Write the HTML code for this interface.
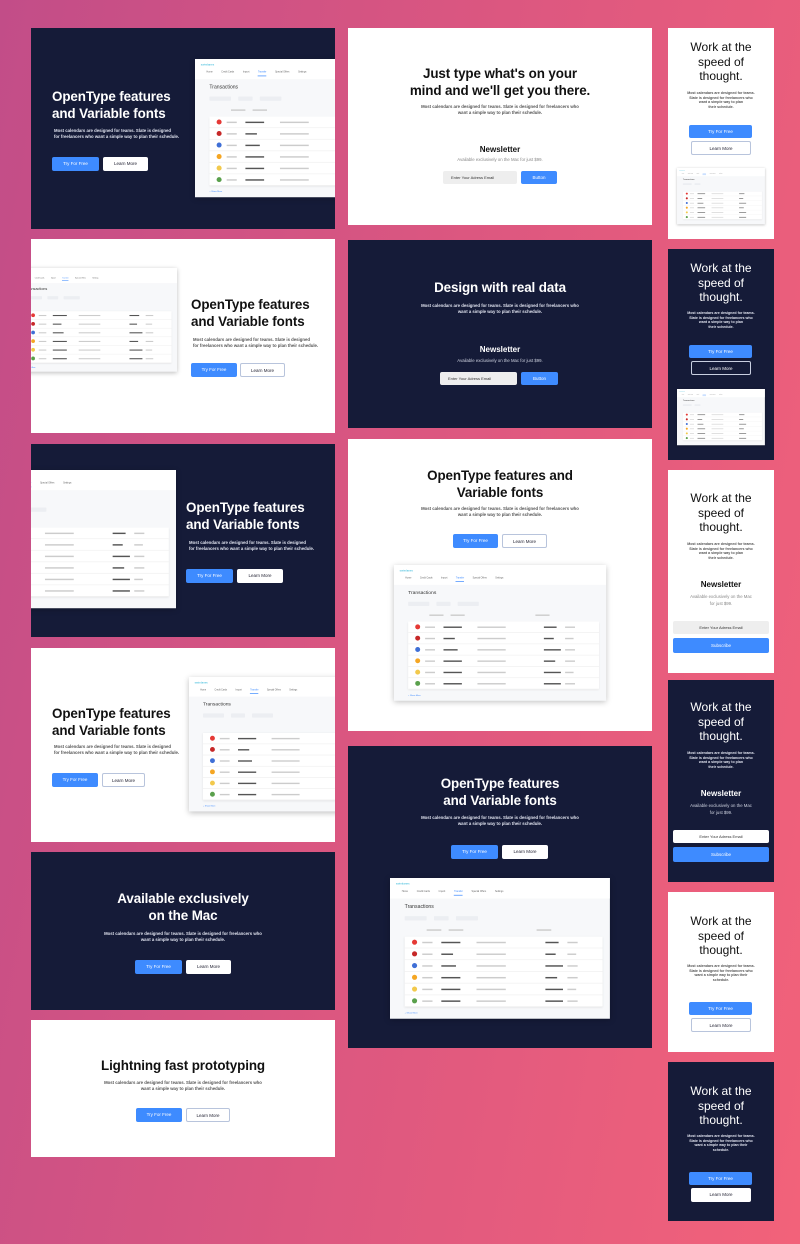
<!DOCTYPE html>
<html><head><meta charset="utf-8"><style>
*{margin:0;padding:0;box-sizing:border-box}
body{width:800px;height:1244px;position:relative;overflow:hidden;font-family:"Liberation Sans",sans-serif;background:linear-gradient(100deg,#c24d88 0%,#dc5780 50%,#f2627a 100%)}
.c{position:absolute;overflow:hidden}
.d{background:#151b38;color:#fff}
.w{background:#fff;color:#111}
.h{position:absolute;font-weight:bold;font-size:13.4px;line-height:16.5px;white-space:nowrap;letter-spacing:-0.1px}
.ctr{left:0;right:0;text-align:center}
.p{position:absolute;font-size:4.3px;line-height:6px;white-space:nowrap;font-weight:bold}
.d .p{color:#dfe2ee}.w .p{color:#555}
.b,.o{position:absolute;height:14px;font-size:4.5px;line-height:14px;text-align:center;border-radius:2px}
.b{background:#3e8bff;color:#fff}
.o{background:#fff;color:#223;border:1px solid #b8c4dc}
.d .o{border:none}
.n{position:absolute;font-weight:bold;font-size:8px}
.g{position:absolute;font-size:4.3px;color:#888}
.in{position:absolute;height:13px;background:#eee;font-size:4px;line-height:13px;color:#333;padding-left:8px;border-radius:2px}
.t{position:absolute;font-size:12px;line-height:14.5px;text-align:center;left:0;right:0}
.dash{position:absolute;width:300px;height:192px;background:#f7f8fa;transform-origin:0 0;box-shadow:0 2px 8px rgba(0,0,0,.25);overflow:hidden}
.dash .top{position:absolute;left:0;top:0;width:300px;height:28px;background:#fff}
.dash .lg{position:absolute;left:8px;top:5px;font-size:4px;color:#2bb5d8}
.dash .nv{position:absolute;left:16px;top:16px;font-size:3.2px;color:#666;white-space:nowrap}
.dash .nv span{margin-right:12px}
.dash .nv .a{color:#3e8bff;border-bottom:1px solid #3e8bff;padding-bottom:3px}
.dash .tt{position:absolute;left:20px;top:36px;font-size:7px;color:#333}
.dash .f{position:absolute;top:52px;height:6px;background:#eceef2;border-radius:1px}
.dash .hd{position:absolute;top:70px;height:1.5px;background:#ccc}
.dash .tb{position:absolute;left:20px;top:80px;width:270px;height:96px;background:#fff;box-shadow:0 1px 3px rgba(0,0,0,.1)}
.dash .r{position:relative;height:16px;border-bottom:1px solid #f0f0f0}
.dash .r i{position:absolute;left:10px;top:4px;width:7px;height:7px;border-radius:50%}
.dash .r b{position:absolute;top:7px;height:1.5px;background:#ccc}
.dash .r .k{background:#555}
.dash .sm{position:absolute;left:20px;top:182px;font-size:3px;color:#3e8bff}
</style></head><body>

<div class="c d" style="left:31px;top:28px;width:304px;height:201px">
<div class="h" style="left:21px;top:61px">OpenType features<br>and Variable fonts</div>
<div class="p" style="left:23px;top:100px">Most calendars are designed for teams. Slate is designed<br>for freelancers who want a simple way to plan their schedule.</div>
<div class="b" style="left:21px;top:129px;width:47px">Try For Free</div>
<div class="o" style="left:72px;top:129px;width:45px">Learn More</div>
<div class="dash" style="left:164px;top:31px;transform:scale(.72)"><div class="top"></div><div class="lg">swimlanes</div><div class="nv"><span>Home</span><span>Credit Cards</span><span>Import</span><span class="a">Transfer</span><span>Special Offers</span><span>Settings</span></div><div class="tt">Transactions</div><div class="f" style="left:20px;width:30px"></div><div class="f" style="left:60px;width:20px"></div><div class="f" style="left:90px;width:30px"></div><div class="hd" style="left:50px;width:20px"></div><div class="hd" style="left:80px;width:20px"></div><div class="hd" style="left:200px;width:20px"></div><div class="tb"><div class="r"><i style="background:#e53935"></i><b style="left:24px;width:14px"></b><b class="k" style="left:50px;width:26px"></b><b style="left:98px;width:40px"></b><b class="k" style="left:192px;width:18px"></b><b style="left:222px;width:14px"></b></div><div class="r"><i style="background:#c62828"></i><b style="left:24px;width:14px"></b><b class="k" style="left:50px;width:16px"></b><b style="left:98px;width:40px"></b><b class="k" style="left:192px;width:14px"></b><b style="left:222px;width:12px"></b></div><div class="r"><i style="background:#3f6fd6"></i><b style="left:24px;width:14px"></b><b class="k" style="left:50px;width:20px"></b><b style="left:98px;width:40px"></b><b class="k" style="left:192px;width:24px"></b><b style="left:222px;width:14px"></b></div><div class="r"><i style="background:#f5a623"></i><b style="left:24px;width:14px"></b><b class="k" style="left:50px;width:26px"></b><b style="left:98px;width:40px"></b><b class="k" style="left:192px;width:16px"></b><b style="left:222px;width:14px"></b></div><div class="r"><i style="background:#f2c94c"></i><b style="left:24px;width:14px"></b><b class="k" style="left:50px;width:26px"></b><b style="left:98px;width:40px"></b><b class="k" style="left:192px;width:24px"></b><b style="left:222px;width:12px"></b></div><div class="r"><i style="background:#5aa04c"></i><b style="left:24px;width:14px"></b><b class="k" style="left:50px;width:26px"></b><b style="left:98px;width:40px"></b><b class="k" style="left:192px;width:24px"></b><b style="left:222px;width:14px"></b></div></div><div class="sm">+ Show More</div></div>
</div>

<div class="c w" style="left:31px;top:239px;width:304px;height:194px">
<div class="dash" style="left:-16px;top:29px;transform:scale(.54)"><div class="top"></div><div class="lg">swimlanes</div><div class="nv"><span>Home</span><span>Credit Cards</span><span>Import</span><span class="a">Transfer</span><span>Special Offers</span><span>Settings</span></div><div class="tt">Transactions</div><div class="f" style="left:20px;width:30px"></div><div class="f" style="left:60px;width:20px"></div><div class="f" style="left:90px;width:30px"></div><div class="tb"><div class="r"><i style="background:#e53935"></i><b style="left:24px;width:14px"></b><b class="k" style="left:50px;width:26px"></b><b style="left:98px;width:40px"></b><b class="k" style="left:192px;width:18px"></b><b style="left:222px;width:14px"></b></div><div class="r"><i style="background:#c62828"></i><b style="left:24px;width:14px"></b><b class="k" style="left:50px;width:16px"></b><b style="left:98px;width:40px"></b><b class="k" style="left:192px;width:14px"></b><b style="left:222px;width:12px"></b></div><div class="r"><i style="background:#3f6fd6"></i><b style="left:24px;width:14px"></b><b class="k" style="left:50px;width:20px"></b><b style="left:98px;width:40px"></b><b class="k" style="left:192px;width:24px"></b><b style="left:222px;width:14px"></b></div><div class="r"><i style="background:#f5a623"></i><b style="left:24px;width:14px"></b><b class="k" style="left:50px;width:26px"></b><b style="left:98px;width:40px"></b><b class="k" style="left:192px;width:16px"></b><b style="left:222px;width:14px"></b></div><div class="r"><i style="background:#f2c94c"></i><b style="left:24px;width:14px"></b><b class="k" style="left:50px;width:26px"></b><b style="left:98px;width:40px"></b><b class="k" style="left:192px;width:24px"></b><b style="left:222px;width:12px"></b></div><div class="r"><i style="background:#5aa04c"></i><b style="left:24px;width:14px"></b><b class="k" style="left:50px;width:26px"></b><b style="left:98px;width:40px"></b><b class="k" style="left:192px;width:24px"></b><b style="left:222px;width:14px"></b></div></div><div class="sm">+ Show More</div></div>
<div class="h" style="left:160px;top:58px">OpenType features<br>and Variable fonts</div>
<div class="p" style="left:162px;top:98px">Most calendars are designed for teams. Slate is designed<br>for freelancers who want a simple way to plan their schedule.</div>
<div class="b" style="left:160px;top:124px;width:46px">Try For Free</div>
<div class="o" style="left:209px;top:124px;width:45px">Learn More</div>
</div>

<div class="c d" style="left:31px;top:444px;width:304px;height:193px">
<div class="dash" style="left:-71px;top:26px;transform:scale(.72)"><div class="top"></div><div class="lg">swimlanes</div><div class="nv"><span>Home</span><span>Credit Cards</span><span>Import</span><span class="a">Transfer</span><span>Special Offers</span><span>Settings</span></div><div class="tt">Transactions</div><div class="f" style="left:20px;width:30px"></div><div class="f" style="left:60px;width:20px"></div><div class="f" style="left:90px;width:30px"></div><div class="tb"><div class="r"><i style="background:#e53935"></i><b style="left:24px;width:14px"></b><b class="k" style="left:50px;width:26px"></b><b style="left:98px;width:40px"></b><b class="k" style="left:192px;width:18px"></b><b style="left:222px;width:14px"></b></div><div class="r"><i style="background:#c62828"></i><b style="left:24px;width:14px"></b><b class="k" style="left:50px;width:16px"></b><b style="left:98px;width:40px"></b><b class="k" style="left:192px;width:14px"></b><b style="left:222px;width:12px"></b></div><div class="r"><i style="background:#3f6fd6"></i><b style="left:24px;width:14px"></b><b class="k" style="left:50px;width:20px"></b><b style="left:98px;width:40px"></b><b class="k" style="left:192px;width:24px"></b><b style="left:222px;width:14px"></b></div><div class="r"><i style="background:#f5a623"></i><b style="left:24px;width:14px"></b><b class="k" style="left:50px;width:26px"></b><b style="left:98px;width:40px"></b><b class="k" style="left:192px;width:16px"></b><b style="left:222px;width:14px"></b></div><div class="r"><i style="background:#f2c94c"></i><b style="left:24px;width:14px"></b><b class="k" style="left:50px;width:26px"></b><b style="left:98px;width:40px"></b><b class="k" style="left:192px;width:24px"></b><b style="left:222px;width:12px"></b></div><div class="r"><i style="background:#5aa04c"></i><b style="left:24px;width:14px"></b><b class="k" style="left:50px;width:26px"></b><b style="left:98px;width:40px"></b><b class="k" style="left:192px;width:24px"></b><b style="left:222px;width:14px"></b></div></div><div class="sm">+ Show More</div></div>
<div class="h" style="left:155px;top:56px">OpenType features<br>and Variable fonts</div>
<div class="p" style="left:158px;top:96px">Most calendars are designed for teams. Slate is designed<br>for freelancers who want a simple way to plan their schedule.</div>
<div class="b" style="left:155px;top:125px;width:47px">Try For Free</div>
<div class="o" style="left:206px;top:125px;width:46px">Learn More</div>
</div>

<div class="c w" style="left:31px;top:648px;width:304px;height:194px">
<div class="h" style="left:21px;top:58px">OpenType features<br>and Variable fonts</div>
<div class="p" style="left:23px;top:96px">Most calendars are designed for teams. Slate is designed<br>for freelancers who want a simple way to plan their schedule.</div>
<div class="b" style="left:21px;top:125px;width:46px">Try For Free</div>
<div class="o" style="left:71px;top:125px;width:43px">Learn More</div>
<div class="dash" style="left:158px;top:29px;transform:scale(.7)"><div class="top"></div><div class="lg">swimlanes</div><div class="nv"><span>Home</span><span>Credit Cards</span><span>Import</span><span class="a">Transfer</span><span>Special Offers</span><span>Settings</span></div><div class="tt">Transactions</div><div class="f" style="left:20px;width:30px"></div><div class="f" style="left:60px;width:20px"></div><div class="f" style="left:90px;width:30px"></div><div class="tb"><div class="r"><i style="background:#e53935"></i><b style="left:24px;width:14px"></b><b class="k" style="left:50px;width:26px"></b><b style="left:98px;width:40px"></b><b class="k" style="left:192px;width:18px"></b><b style="left:222px;width:14px"></b></div><div class="r"><i style="background:#c62828"></i><b style="left:24px;width:14px"></b><b class="k" style="left:50px;width:16px"></b><b style="left:98px;width:40px"></b><b class="k" style="left:192px;width:14px"></b><b style="left:222px;width:12px"></b></div><div class="r"><i style="background:#3f6fd6"></i><b style="left:24px;width:14px"></b><b class="k" style="left:50px;width:20px"></b><b style="left:98px;width:40px"></b><b class="k" style="left:192px;width:24px"></b><b style="left:222px;width:14px"></b></div><div class="r"><i style="background:#f5a623"></i><b style="left:24px;width:14px"></b><b class="k" style="left:50px;width:26px"></b><b style="left:98px;width:40px"></b><b class="k" style="left:192px;width:16px"></b><b style="left:222px;width:14px"></b></div><div class="r"><i style="background:#f2c94c"></i><b style="left:24px;width:14px"></b><b class="k" style="left:50px;width:26px"></b><b style="left:98px;width:40px"></b><b class="k" style="left:192px;width:24px"></b><b style="left:222px;width:12px"></b></div><div class="r"><i style="background:#5aa04c"></i><b style="left:24px;width:14px"></b><b class="k" style="left:50px;width:26px"></b><b style="left:98px;width:40px"></b><b class="k" style="left:192px;width:24px"></b><b style="left:222px;width:14px"></b></div></div><div class="sm">+ Show More</div></div>
</div>

<div class="c d" style="left:31px;top:852px;width:304px;height:158px">
<div class="h ctr" style="top:39px">Available exclusively<br>on the Mac</div>
<div class="p ctr" style="top:79px;text-align:center">Most calendars are designed for teams. Slate is designed for freelancers who<br>want a simple way to plan their schedule.</div>
<div class="b" style="left:104px;top:108px;width:47px">Try For Free</div>
<div class="o" style="left:155px;top:108px;width:45px">Learn More</div>
</div>

<div class="c w" style="left:31px;top:1020px;width:304px;height:137px">
<div class="h ctr" style="top:38px;text-align:center">Lightning fast prototyping</div>
<div class="p ctr" style="top:60px;text-align:center">Most calendars are designed for teams. Slate is designed for freelancers who<br>want a simple way to plan their schedule.</div>
<div class="b" style="left:105px;top:88px;width:46px">Try For Free</div>
<div class="o" style="left:155px;top:88px;width:44px">Learn More</div>
</div>

<div class="c w" style="left:348px;top:28px;width:304px;height:197px">
<div class="h ctr" style="top:38px;text-align:center">Just type what's on your<br>mind and we'll get you there.</div>
<div class="p ctr" style="top:76px;text-align:center">Most calendars are designed for teams. Slate is designed for freelancers who<br>want a simple way to plan their schedule.</div>
<div class="n ctr" style="top:117px;text-align:center">Newsletter</div>
<div class="g ctr" style="top:129px;text-align:center">Available exclusively on the Mac for just $99.</div>
<div class="in" style="left:95px;top:143px;width:74px">Enter Your Adress Email</div>
<div class="b" style="left:173px;top:143px;width:36px;height:13px;line-height:13px">Button</div>
</div>

<div class="c d" style="left:348px;top:240px;width:304px;height:188px">
<div class="h ctr" style="top:40px;text-align:center">Design with real data</div>
<div class="p ctr" style="top:63px;text-align:center">Most calendars are designed for teams. Slate is designed for freelancers who<br>want a simple way to plan their schedule.</div>
<div class="n ctr" style="top:105px;text-align:center;color:#fff">Newsletter</div>
<div class="g ctr" style="top:118px;text-align:center;color:#cfd3e0">Available exclusively on the Mac for just $99.</div>
<div class="in" style="left:92px;top:132px;width:77px">Enter Your Adress Email</div>
<div class="b" style="left:173px;top:132px;width:37px;height:13px;line-height:13px">Button</div>
</div>

<div class="c w" style="left:348px;top:439px;width:304px;height:292px">
<div class="h ctr" style="top:29px;text-align:center">OpenType features and<br>Variable fonts</div>
<div class="p ctr" style="top:67px;text-align:center">Most calendars are designed for teams. Slate is designed for freelancers who<br>want a simple way to plan their schedule.</div>
<div class="b" style="left:105px;top:95px;width:45px">Try For Free</div>
<div class="o" style="left:154px;top:95px;width:45px">Learn More</div>
<div class="dash" style="left:46px;top:126px;transform:scale(.707)"><div class="top"></div><div class="lg">swimlanes</div><div class="nv"><span>Home</span><span>Credit Cards</span><span>Import</span><span class="a">Transfer</span><span>Special Offers</span><span>Settings</span></div><div class="tt">Transactions</div><div class="f" style="left:20px;width:30px"></div><div class="f" style="left:60px;width:20px"></div><div class="f" style="left:90px;width:30px"></div><div class="hd" style="left:50px;width:20px"></div><div class="hd" style="left:80px;width:20px"></div><div class="hd" style="left:200px;width:20px"></div><div class="tb"><div class="r"><i style="background:#e53935"></i><b style="left:24px;width:14px"></b><b class="k" style="left:50px;width:26px"></b><b style="left:98px;width:40px"></b><b class="k" style="left:192px;width:18px"></b><b style="left:222px;width:14px"></b></div><div class="r"><i style="background:#c62828"></i><b style="left:24px;width:14px"></b><b class="k" style="left:50px;width:16px"></b><b style="left:98px;width:40px"></b><b class="k" style="left:192px;width:14px"></b><b style="left:222px;width:12px"></b></div><div class="r"><i style="background:#3f6fd6"></i><b style="left:24px;width:14px"></b><b class="k" style="left:50px;width:20px"></b><b style="left:98px;width:40px"></b><b class="k" style="left:192px;width:24px"></b><b style="left:222px;width:14px"></b></div><div class="r"><i style="background:#f5a623"></i><b style="left:24px;width:14px"></b><b class="k" style="left:50px;width:26px"></b><b style="left:98px;width:40px"></b><b class="k" style="left:192px;width:16px"></b><b style="left:222px;width:14px"></b></div><div class="r"><i style="background:#f2c94c"></i><b style="left:24px;width:14px"></b><b class="k" style="left:50px;width:26px"></b><b style="left:98px;width:40px"></b><b class="k" style="left:192px;width:24px"></b><b style="left:222px;width:12px"></b></div><div class="r"><i style="background:#5aa04c"></i><b style="left:24px;width:14px"></b><b class="k" style="left:50px;width:26px"></b><b style="left:98px;width:40px"></b><b class="k" style="left:192px;width:24px"></b><b style="left:222px;width:14px"></b></div></div><div class="sm">+ Show More</div></div>
</div>

<div class="c d" style="left:348px;top:746px;width:304px;height:302px">
<div class="h ctr" style="top:30px;text-align:center">OpenType features<br>and Variable fonts</div>
<div class="p ctr" style="top:69px;text-align:center">Most calendars are designed for teams. Slate is designed for freelancers who<br>want a simple way to plan their schedule.</div>
<div class="b" style="left:103px;top:99px;width:47px">Try For Free</div>
<div class="o" style="left:154px;top:99px;width:46px">Learn More</div>
<div class="dash" style="left:42px;top:132px;transform:scale(.733)"><div class="top"></div><div class="lg">swimlanes</div><div class="nv"><span>Home</span><span>Credit Cards</span><span>Import</span><span class="a">Transfer</span><span>Special Offers</span><span>Settings</span></div><div class="tt">Transactions</div><div class="f" style="left:20px;width:30px"></div><div class="f" style="left:60px;width:20px"></div><div class="f" style="left:90px;width:30px"></div><div class="hd" style="left:50px;width:20px"></div><div class="hd" style="left:80px;width:20px"></div><div class="hd" style="left:200px;width:20px"></div><div class="tb"><div class="r"><i style="background:#e53935"></i><b style="left:24px;width:14px"></b><b class="k" style="left:50px;width:26px"></b><b style="left:98px;width:40px"></b><b class="k" style="left:192px;width:18px"></b><b style="left:222px;width:14px"></b></div><div class="r"><i style="background:#c62828"></i><b style="left:24px;width:14px"></b><b class="k" style="left:50px;width:16px"></b><b style="left:98px;width:40px"></b><b class="k" style="left:192px;width:14px"></b><b style="left:222px;width:12px"></b></div><div class="r"><i style="background:#3f6fd6"></i><b style="left:24px;width:14px"></b><b class="k" style="left:50px;width:20px"></b><b style="left:98px;width:40px"></b><b class="k" style="left:192px;width:24px"></b><b style="left:222px;width:14px"></b></div><div class="r"><i style="background:#f5a623"></i><b style="left:24px;width:14px"></b><b class="k" style="left:50px;width:26px"></b><b style="left:98px;width:40px"></b><b class="k" style="left:192px;width:16px"></b><b style="left:222px;width:14px"></b></div><div class="r"><i style="background:#f2c94c"></i><b style="left:24px;width:14px"></b><b class="k" style="left:50px;width:26px"></b><b style="left:98px;width:40px"></b><b class="k" style="left:192px;width:24px"></b><b style="left:222px;width:12px"></b></div><div class="r"><i style="background:#5aa04c"></i><b style="left:24px;width:14px"></b><b class="k" style="left:50px;width:26px"></b><b style="left:98px;width:40px"></b><b class="k" style="left:192px;width:24px"></b><b style="left:222px;width:14px"></b></div></div><div class="sm">+ Show More</div></div>
</div>

<div class="c w" style="left:668px;top:28px;width:106px;height:211px">
<div class="t" style="top:12px">Work at the<br>speed of<br>thought.</div>
<div class="p ctr" style="top:63px;text-align:center;font-size:3.6px;line-height:4.5px">Most calendars are designed for teams.<br>Slate is designed for freelancers who<br>want a simple way to plan<br>their schedule.</div>
<div class="b" style="left:21px;top:97px;width:63px;height:13px;line-height:13px">Try For Free</div>
<div class="o" style="left:23px;top:113px;width:60px">Learn More</div>
<div class="dash" style="left:9px;top:140px;transform:scale(.293)"><div class="top"></div><div class="lg">swimlanes</div><div class="nv"><span>Home</span><span>Credit Cards</span><span>Import</span><span class="a">Transfer</span><span>Special Offers</span><span>Settings</span></div><div class="tt">Transactions</div><div class="f" style="left:20px;width:30px"></div><div class="f" style="left:60px;width:20px"></div><div class="tb"><div class="r"><i style="background:#e53935"></i><b style="left:24px;width:14px"></b><b class="k" style="left:50px;width:26px"></b><b style="left:98px;width:40px"></b><b class="k" style="left:192px;width:18px"></b></div><div class="r"><i style="background:#c62828"></i><b style="left:24px;width:14px"></b><b class="k" style="left:50px;width:16px"></b><b style="left:98px;width:40px"></b><b class="k" style="left:192px;width:14px"></b></div><div class="r"><i style="background:#3f6fd6"></i><b style="left:24px;width:14px"></b><b class="k" style="left:50px;width:20px"></b><b style="left:98px;width:40px"></b><b class="k" style="left:192px;width:24px"></b></div><div class="r"><i style="background:#f5a623"></i><b style="left:24px;width:14px"></b><b class="k" style="left:50px;width:26px"></b><b style="left:98px;width:40px"></b><b class="k" style="left:192px;width:16px"></b></div><div class="r"><i style="background:#f2c94c"></i><b style="left:24px;width:14px"></b><b class="k" style="left:50px;width:26px"></b><b style="left:98px;width:40px"></b><b class="k" style="left:192px;width:24px"></b></div><div class="r"><i style="background:#5aa04c"></i><b style="left:24px;width:14px"></b><b class="k" style="left:50px;width:26px"></b><b style="left:98px;width:40px"></b><b class="k" style="left:192px;width:24px"></b></div></div></div>
</div>

<div class="c d" style="left:668px;top:249px;width:106px;height:211px">
<div class="t" style="top:12px">Work at the<br>speed of<br>thought.</div>
<div class="p ctr" style="top:62px;text-align:center;font-size:3.6px;line-height:4.5px">Most calendars are designed for teams.<br>Slate is designed for freelancers who<br>want a simple way to plan<br>their schedule.</div>
<div class="b" style="left:21px;top:96px;width:63px;height:13px;line-height:13px">Try For Free</div>
<div class="o" style="left:23px;top:112px;width:60px;background:transparent;color:#fff;border:1px solid #c9cfe0">Learn More</div>
<div class="dash" style="left:9px;top:140px;transform:scale(.293)"><div class="top"></div><div class="lg">swimlanes</div><div class="nv"><span>Home</span><span>Credit Cards</span><span>Import</span><span class="a">Transfer</span><span>Special Offers</span><span>Settings</span></div><div class="tt">Transactions</div><div class="f" style="left:20px;width:30px"></div><div class="f" style="left:60px;width:20px"></div><div class="tb"><div class="r"><i style="background:#e53935"></i><b style="left:24px;width:14px"></b><b class="k" style="left:50px;width:26px"></b><b style="left:98px;width:40px"></b><b class="k" style="left:192px;width:18px"></b></div><div class="r"><i style="background:#c62828"></i><b style="left:24px;width:14px"></b><b class="k" style="left:50px;width:16px"></b><b style="left:98px;width:40px"></b><b class="k" style="left:192px;width:14px"></b></div><div class="r"><i style="background:#3f6fd6"></i><b style="left:24px;width:14px"></b><b class="k" style="left:50px;width:20px"></b><b style="left:98px;width:40px"></b><b class="k" style="left:192px;width:24px"></b></div><div class="r"><i style="background:#f5a623"></i><b style="left:24px;width:14px"></b><b class="k" style="left:50px;width:26px"></b><b style="left:98px;width:40px"></b><b class="k" style="left:192px;width:16px"></b></div><div class="r"><i style="background:#f2c94c"></i><b style="left:24px;width:14px"></b><b class="k" style="left:50px;width:26px"></b><b style="left:98px;width:40px"></b><b class="k" style="left:192px;width:24px"></b></div><div class="r"><i style="background:#5aa04c"></i><b style="left:24px;width:14px"></b><b class="k" style="left:50px;width:26px"></b><b style="left:98px;width:40px"></b><b class="k" style="left:192px;width:24px"></b></div></div></div>
</div>

<div class="c w" style="left:668px;top:470px;width:106px;height:203px">
<div class="t" style="top:21px">Work at the<br>speed of<br>thought.</div>
<div class="p ctr" style="top:72px;text-align:center;font-size:3.6px;line-height:4.5px">Most calendars are designed for teams.<br>Slate is designed for freelancers who<br>want a simple way to plan<br>their schedule.</div>
<div class="n ctr" style="top:110px;text-align:center">Newsletter</div>
<div class="g ctr" style="top:123px;text-align:center;line-height:7px">Available exclusively on the Mac<br>for just $99.</div>
<div class="in" style="left:5px;top:151px;width:96px;text-align:center;padding:0">Enter Your Adress Email</div>
<div class="b" style="left:5px;top:168px;width:96px;height:15px;line-height:15px">Subscribe</div>
</div>

<div class="c d" style="left:668px;top:680px;width:106px;height:202px">
<div class="t" style="top:20px">Work at the<br>speed of<br>thought.</div>
<div class="p ctr" style="top:71px;text-align:center;font-size:3.6px;line-height:4.5px">Most calendars are designed for teams.<br>Slate is designed for freelancers who<br>want a simple way to plan<br>their schedule.</div>
<div class="n ctr" style="top:109px;text-align:center">Newsletter</div>
<div class="g ctr" style="top:122px;text-align:center;line-height:7px;color:#cfd3e0">Available exclusively on the Mac<br>for just $99.</div>
<div class="in" style="left:5px;top:150px;width:96px;text-align:center;padding:0;background:#fff">Enter Your Adress Email</div>
<div class="b" style="left:5px;top:167px;width:96px;height:15px;line-height:15px">Subscribe</div>
</div>

<div class="c w" style="left:668px;top:892px;width:106px;height:160px">
<div class="t" style="top:22px">Work at the<br>speed of<br>thought.</div>
<div class="p ctr" style="top:72px;text-align:center;font-size:3.6px;line-height:4.5px">Most calendars are designed for teams.<br>Slate is designed for freelancers who<br>want a simple way to plan their<br>schedule.</div>
<div class="b" style="left:21px;top:110px;width:63px;height:13px;line-height:13px">Try For Free</div>
<div class="o" style="left:23px;top:126px;width:60px">Learn More</div>
</div>

<div class="c d" style="left:668px;top:1062px;width:106px;height:159px">
<div class="t" style="top:22px">Work at the<br>speed of<br>thought.</div>
<div class="p ctr" style="top:72px;text-align:center;font-size:3.6px;line-height:4.5px">Most calendars are designed for teams.<br>Slate is designed for freelancers who<br>want a simple way to plan their<br>schedule.</div>
<div class="b" style="left:21px;top:110px;width:63px;height:13px;line-height:13px">Try For Free</div>
<div class="o" style="left:23px;top:126px;width:60px">Learn More</div>
</div>

</body></html>
